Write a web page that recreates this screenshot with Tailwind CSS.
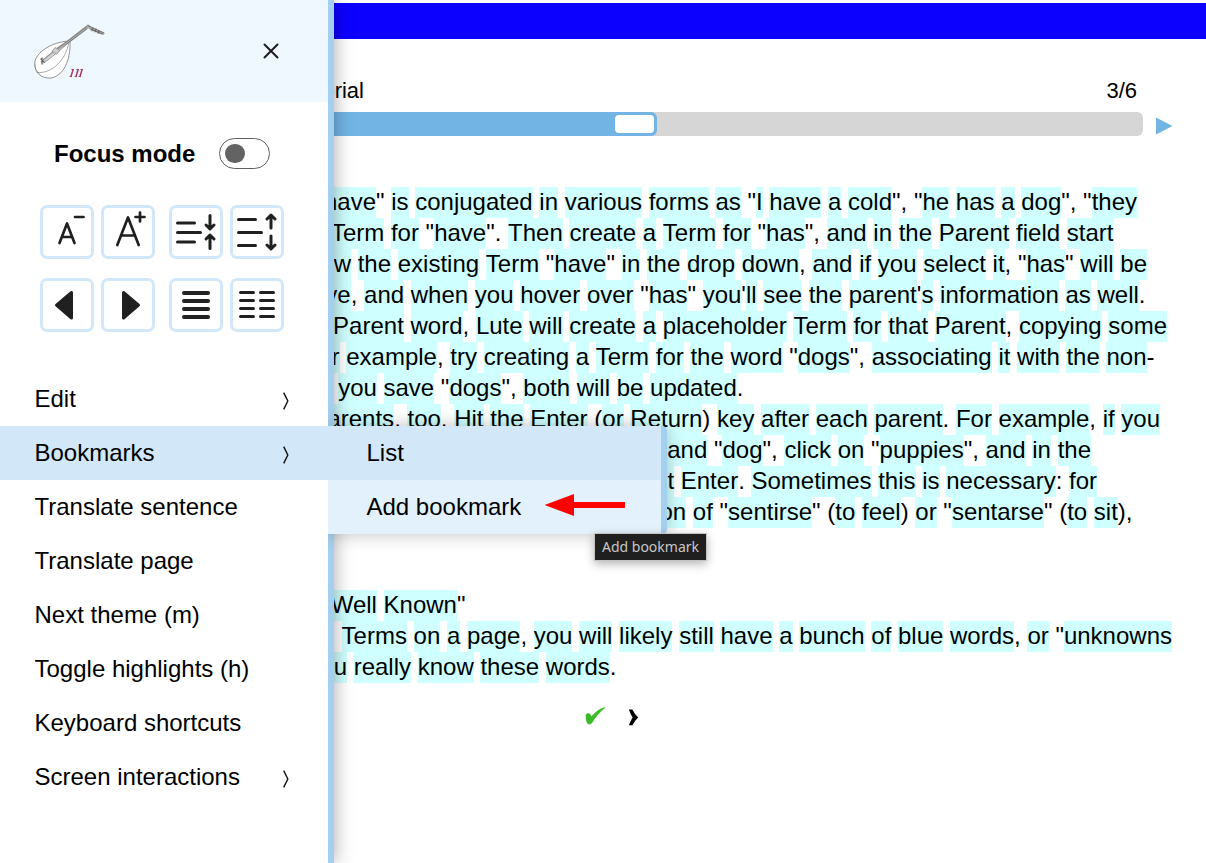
<!DOCTYPE html>
<html lang="en">
<head>
<meta charset="utf-8">
<title>Tutorial</title>
<script src="https://cdn.jsdelivr.net/npm/@tailwindcss/browser@4"></script>
</head>
<body class="relative h-[863px] w-[1206px] overflow-hidden bg-white font-['Liberation_Sans',Arial,sans-serif] text-2xl text-black">
<main class="flex h-full flex-col pt-[3px]">
  <div class="h-9 shrink-0 bg-[#0c00ff]"></div>
  <div class="flex h-[73px] shrink-0 items-end justify-between pr-[69px] pb-[6px] text-[22px] leading-[30px]">
    <span class="w-[364px] text-right">Tutorial</span><span>3/6</span>
  </div>
  <div class="flex h-6 shrink-0 items-center">
    <div class="flex h-6 w-[1143px] overflow-hidden rounded-md bg-[#d6d6d6]">
      <div class="flex h-6 w-[657px] justify-end rounded-r-md bg-[#72b5e4] p-[3px]"><div class="h-[18px] w-[39px] rounded-[4px] bg-white"></div></div>
    </div>
    <svg class="mt-[3px] ml-[13px]" width="17" height="18" viewBox="0 0 17 18"><path d="M0 0.5 L16.5 9 L0 17.5Z" fill="#72b5e4"/></svg>
  </div>
  <div id="text" class="mt-[51px] leading-[29px]"></div>
  <div class="mt-[18px] flex h-[30px] items-center pl-[585px]">
    <svg width="21" height="18" viewBox="0 0 21 18"><path d="M0.7 8 C1.6 6 4.400 5.600 5.400 7.300 L6.300 9.600 C9.500 5.500 14 1.800 19.4 0.2 L20.3 0.8 C15.5 4.5 11 9.3 7.400 15.600 C6 17.8 3.2 17.9 2.2 16.3 C1 14 0.5 11 0.7 8Z" fill="#3cbb29"/></svg>
    <svg class="mt-[2px] ml-[22px]" width="11" height="17" viewBox="0 0 11 17"><path d="M0.8 0.5H4.400Q6.300 4.800 10.200 8.400Q6.300 12 4.400 16.300H0.800Q2.400 12 4.600 8.400Q2.400 4.800 0.800 0.500Z" fill="#000"/></svg>
  </div>
</main>

<aside class="absolute inset-y-0 left-0 flex w-[334px] flex-col border-r-[6px] border-[#a5cfee] bg-white shadow-[0_0_18px_rgba(0,0,0,0.35)]">
  <div class="flex h-[102px] shrink-0 items-center justify-between bg-[#eff7ff] pr-[49px] pl-[33px]">
    <svg width="74" height="60" viewBox="33 21 74 60" fill="none" stroke-linecap="round" stroke-linejoin="round">
      <path d="M70 41 C56 41 37 50 34.8 62 C34 73 42 79 51 78 C63 76 71 61 70 41Z" fill="#fff" stroke="#777" stroke-width=".8"/>
      <path d="M37 72.5 C52 74 66 60 69 42 M35 65 C35 70 37 72 39 73" stroke="#888" stroke-width=".7"/>
      <path d="M42 62 L54 52" stroke="#ccc" stroke-width="3"/>
      <path d="M56 50 L68 42 L87 27" stroke="#aaa" stroke-width="3.200"/>
      <path d="M43 60 L54 51 L87 26.5 M44 63 L58 52 L69 42 L87 29" stroke="#666" stroke-width=".7"/>
      <path d="M52 51 L55 47.5 L60 50 L57 54Z" fill="#ccc" stroke="#888" stroke-width=".7"/>
      <path d="M41 59 L44 62 M42 58 L42 64" stroke="#666" stroke-width="1.300"/>
      <path d="M88 26 L91 29 L103 33.5" stroke="#aaa" stroke-width="2.600"/>
      <path d="M88 25.5 L104 33 M91 29 L102 34 M93 28l-1 3M96 29l-1 3M99 30.5l-1 3" stroke="#555" stroke-width=".8"/>
      <g stroke="#a63b65" stroke-linecap="butt"><path d="M73.300 69L70.800 77M78.300 69L75.800 77M82.300 69L79.800 77" stroke-width="1.500"/><path d="M71.300 69.500H74M76.300 69.500H79M80.300 69.500H83M69.500 76.500H72M74.500 76.500H77M78.500 76.500H81" stroke-width=".8"/></g>
    </svg>
    <svg width="16" height="16" viewBox="0 0 16 16" stroke="#1e1e1e" stroke-width="2" stroke-linecap="round"><path d="M1.500 1.500L14.500 14.500M14.500 1.500L1.500 14.500"/></svg>
  </div>
  <div class="mt-9 flex h-[31px] shrink-0 items-center pl-[54px]">
    <span class="w-[165px] font-bold">Focus mode</span>
    <div class="flex h-[31px] w-[51px] items-center rounded-full border border-[#606060] pl-[5px]"><div class="size-[19.500px] rounded-full bg-[#636363]"></div></div>
  </div>
  <div class="mt-9 grid shrink-0 grid-cols-[61px_68px_61px_54px] gap-y-[19px] pl-10">
    <button class="size-[54px] rounded-[7px] border-[3px] border-[#d2e8fa]"><svg width="48" height="48" viewBox="43 208 48 48" fill="none" stroke="#202020" stroke-width="2.700" stroke-linecap="round" stroke-linejoin="round"><path d="M59.500 243L67 223.500L74.500 243M62 237H72M75 217H83.500"/></svg></button>
    <button class="size-[54px] rounded-[7px] border-[3px] border-[#d2e8fa]"><svg width="48" height="48" viewBox="104 208 48 48" fill="none" stroke="#202020" stroke-width="2.700" stroke-linecap="round" stroke-linejoin="round"><path d="M117.300 245L128 217.500L138.700 245M121 235.500H135M135.500 217H144.500M140 212.500V221.500"/></svg></button>
    <button class="size-[54px] rounded-[7px] border-[3px] border-[#d2e8fa]"><svg width="48" height="48" viewBox="172 208 48 48" fill="none" stroke="#202020" stroke-width="3" stroke-linecap="round" stroke-linejoin="round"><path d="M177.500 223H194.500M177.500 232.500H200.500M177.500 242H194.500M210 215.500V228M206 225L210 229L214 225M210 248.500V236M206 239L210 235L214 239"/></svg></button>
    <button class="size-[54px] rounded-[7px] border-[3px] border-[#d2e8fa]"><svg width="48" height="48" viewBox="233 208 48 48" fill="none" stroke="#202020" stroke-width="3" stroke-linecap="round" stroke-linejoin="round"><path d="M238.500 219.500H255.500M238.500 232.500H261.500M238.500 245.500H255.500M271 228V216M267 219L271 215L275 219M271 236V248M267 245L271 249L275 245"/></svg></button>
    <button class="size-[54px] rounded-[7px] border-[3px] border-[#d2e8fa]"><svg width="48" height="48" viewBox="43 281 48 48" fill="#202020" stroke="#202020" stroke-width="3" stroke-linejoin="round"><path d="M71.500 292.500V318L56.500 305.200Z"/></svg></button>
    <button class="size-[54px] rounded-[7px] border-[3px] border-[#d2e8fa]"><svg width="48" height="48" viewBox="104 281 48 48" fill="#202020" stroke="#202020" stroke-width="3" stroke-linejoin="round"><path d="M123.500 292.500V318L138.500 305.200Z"/></svg></button>
    <button class="size-[54px] rounded-[7px] border-[3px] border-[#d2e8fa]"><svg width="48" height="48" viewBox="172 281 48 48" stroke="#202020" stroke-width="4" stroke-linecap="round"><path d="M184 293H208M184 301H208M184 309H208M184 317H208"/></svg></button>
    <button class="size-[54px] rounded-[7px] border-[3px] border-[#d2e8fa]"><svg width="48" height="48" viewBox="233 281 48 48" stroke="#202020" stroke-width="3" stroke-linecap="round"><path d="M240.500 292.500H253.500M260.500 292.500H273.500M240.500 300.500H253.500M260.500 300.500H273.500M240.500 308.500H253.500M260.500 308.500H273.500M240.500 316.500H253.500M260.500 316.500H273.500"/></svg></button>
  </div>
  <nav class="mt-10 flex flex-col leading-[54px]">
    <div class="flex items-center justify-between pr-[38px] pl-[34.500px]">Edit<svg class="mt-1" width="8" height="18" viewBox="0 0 8 18" fill="none" stroke="#111" stroke-width="1.400"><path d="M1.700 0.600L5.800 9L1.700 17.400"/></svg></div>
    <div class="flex items-center justify-between bg-[#d2e7f8] pr-[38px] pl-[34.500px]">Bookmarks<svg class="mt-1" width="8" height="18" viewBox="0 0 8 18" fill="none" stroke="#111" stroke-width="1.400"><path d="M1.700 0.600L5.800 9L1.700 17.400"/></svg></div>
    <div class="pl-[34.500px]">Translate sentence</div>
    <div class="pl-[34.500px]">Translate page</div>
    <div class="pl-[34.500px]">Next theme (m)</div>
    <div class="pl-[34.500px]">Toggle highlights (h)</div>
    <div class="pl-[34.500px]">Keyboard shortcuts</div>
    <div class="flex items-center justify-between pr-[38px] pl-[34.500px]">Screen interactions<svg class="mt-1" width="8" height="18" viewBox="0 0 8 18" fill="none" stroke="#111" stroke-width="1.400"><path d="M1.700 0.600L5.800 9L1.700 17.400"/></svg></div>
  </nav>
</aside>

<div class="absolute top-[426px] left-[328px] h-[108px] w-[339px] rounded-r-[5px] border-r-[6px] border-[#a5cfee] bg-[#e3f1fd] leading-[54px] shadow-[0_0_18px_rgba(0,0,0,0.25)] [clip-path:inset(-30px_-30px_-30px_0)]">
  <div class="bg-[#d2e7f8] pl-[38.500px]">List</div>
  <div class="flex items-center pl-[38.500px]"><span class="w-[177px]">Add bookmark</span><svg class="-mt-1" width="82" height="22" viewBox="0 0 82 22" fill="#f00"><path d="M0.500 11L30 0V8H81V14H30V22Z"/></svg></div>
</div>
<div class="absolute top-[533px] left-[594px] flex h-7 w-[113px] items-center justify-center border border-[#c4c4c4] bg-[#1f1f1f] font-['Noto_Sans',sans-serif] text-[14px] text-[#c8c8c8] shadow-[0_3px_10px_rgba(0,0,0,0.3)]">Add bookmark</div>

<script>
// [right edge in px, text]; an empty row is a blank line
const rows = [
  [1137, '"have" is conjugated in various forms as "I have a cold", "he has a dog", "they'],
  [1113.5, 'Term for "have". Then create a Term for "has", and in the Parent field start'],
  [1147, 'show the existing Term "have" in the drop down, and if you select it, "has" will be'],
  [1145.5, 'above, and when you hover over "has" you\'ll see the parent\'s information as well.'],
  [1167, 'Parent word, Lute will create a placeholder Term for that Parent, copying some'],
  [1154.5, 'For example, try creating a Term for the word "dogs", associating it with the non-'],
  [743.5, 'you save "dogs", both will be updated.'],
  [1160, 'parents, too. Hit the Enter (or Return) key after each parent. For example, if you'],
  [1091, 'and "dog", click on "puppies", and in the'],
  [1097, 'hit Enter. Sometimes this is necessary: for'],
  [1132.5, 'conjugation of "sentirse" (to feel) or "sentarse" (to sit),'],
  [0, ''], [0, ''],
  [465.5, 'Well Known"'],
  [1172, 'Terms on a page, you will likely still have a bunch of blue words, or "unknowns'],
  [616.5, 'you really know these words.']
];
const box = document.getElementById('text');
for (const [edge, text] of rows) {
  const row = document.createElement('div');
  row.className = 'flex h-[31px] justify-end whitespace-pre';
  row.style.width = edge + 'px';
  for (const part of text.match(/[A-Za-z]+|[^A-Za-z]+/g) || []) {
    const s = document.createElement('span');
    s.textContent = part;
    if (/[A-Za-z]/.test(part)) s.className = 'bg-[#d0ffff]';
    row.append(s);
  }
  box.append(row);
}
</script>
</body>
</html>
